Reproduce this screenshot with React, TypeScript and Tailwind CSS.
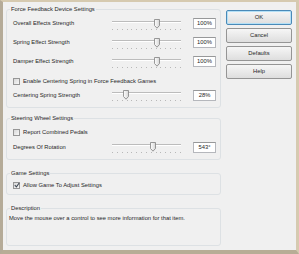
import type { ReactNode } from "react";

function Group({ title, className, children }: { title: string; className: string; children: ReactNode }) {
  return (
    <fieldset className={`rounded-[3px] border border-[#dde1e4] ${className}`}>
      <legend className="ml-[3px] h-[8px] px-[1px] leading-[8px]">{title}</legend>
      {children}
    </fieldset>
  );
}

function Thumb({ className }: { className: string }) {
  return (
    <svg className={`absolute top-[2px] ${className}`} width="6" height="10" viewBox="0 0 6 10">
      <defs>
        <linearGradient id="thumbFill" x1="0" y1="0" x2="1" y2="0">
          <stop offset="0" stopColor="#ffffff" />
          <stop offset="1" stopColor="#d6d6d6" />
        </linearGradient>
      </defs>
      <path d="M0.5 0.5 H5.5 V6.5 L3 9.2 L0.5 6.5 Z" fill="url(#thumbFill)" stroke="#808080" strokeWidth="0.8" />
    </svg>
  );
}

function Slider({ thumb }: { thumb: string }) {
  return (
    <div className="relative h-[14px] w-[69px]">
      <div className="absolute left-0 right-0 top-[4px] h-[1px] bg-[#bcbcbc]" />
      <div className="absolute left-0 right-0 top-[5px] h-[1px] bg-white" />
      <div className="absolute left-0 right-0 top-[12px] flex justify-between">
        {Array.from({ length: 15 }).map((_, i) => (
          <span key={i} className="h-[1px] w-[1px] bg-[#b8b8b8]" />
        ))}
      </div>
      <Thumb className={thumb} />
    </div>
  );
}

function SliderRow({ label, value, thumb, className = "" }: { label: string; value: string; thumb: string; className?: string }) {
  return (
    <div className={`flex items-center ${className}`}>
      <span className="w-[99px]">{label}</span>
      <Slider thumb={thumb} />
      <div className="ml-[12px] flex h-[11px] w-[23px] items-center justify-center border border-[#b5b7bc] border-t-[#979899] bg-white">
        {value}
      </div>
    </div>
  );
}

function Check({ label, checked = false, className = "" }: { label: string; checked?: boolean; className?: string }) {
  return (
    <div className={`flex h-[14px] items-center ${className}`}>
      <span className="relative flex h-[7px] w-[7px] items-center justify-center border border-[#969696] bg-gradient-to-br from-[#d8d8d8] to-[#f8f8f8]">
        {checked && (
          <svg width="6" height="6" viewBox="0 0 6 6" className="absolute">
            <path d="M0.8 3.2 L2.4 4.8 L5.2 1" fill="none" stroke="#404a55" strokeWidth="1.1" />
          </svg>
        )}
      </span>
      <span className="ml-[3px]">{label}</span>
    </div>
  );
}

function Button({ label, primary = false }: { label: string; primary?: boolean }) {
  return (
    <button
      className={`flex h-[15px] w-[66px] items-center justify-center rounded-[2px] border bg-gradient-to-b from-[#f6f6f6] to-[#dedede] ${
        primary ? "border-[#4a8ab8] shadow-[inset_0_0_0_1px_#b4e0f6]" : "border-[#959595]"
      }`}
    >
      {label}
    </button>
  );
}

export default function App() {
  return (
    <div className="h-[254px] w-[299px] border-b-[4px] border-l-[3px] border-r-[3px] border-t-[2px] border-[#d6cab0] border-l-[#b5ab98] border-b-[#b8ad96] bg-[#f0f0f0] font-['Liberation_Sans',Arial,sans-serif] text-[5.8px] text-[#262626]">
      <div className="flex">
        <div className="ml-[3px] flex w-[215px] flex-col">
          <Group title="Force Feedback Device Settings" className="mt-[3px]">
            <div className="flex flex-col pb-[5px] pl-[6px] pr-[4px] pt-[1px]">
              <SliderRow label="Overall Effects Strength" value="100%" thumb="left-[42px]" className="h-[19px]" />
              <SliderRow label="Spring Effect Strength" value="100%" thumb="left-[42px]" className="h-[19px]" />
              <SliderRow label="Damper Effect Strength" value="100%" thumb="left-[42px]" className="h-[19px]" />
              <Check label="Enable Centering Spring in Force Feedback Games" className="mt-[3px]" />
              <SliderRow label="Centering Spring Strength" value="28%" thumb="left-[11px]" className="h-[14px]" />
            </div>
          </Group>
          <Group title="Steering Wheel Settings" className="mt-[6px]">
            <div className="flex flex-col pb-[5px] pl-[6px] pr-[4px]">
              <Check label="Report Combined Pedals" className="mt-[3px]" />
              <SliderRow label="Degrees Of Rotation" value="543°" thumb="left-[38px]" className="mt-[1px] h-[14px]" />
            </div>
          </Group>
          <Group title="Game Settings" className="mt-[9px]">
            <div className="flex flex-col pb-[2px] pl-[6px]">
              <Check label="Allow Game To Adjust Settings" checked className="mt-[1px]" />
            </div>
          </Group>
          <Group title="Description" className="mt-[9px] h-[42px]">
            <div className="mt-[2px] h-[8px] pl-[2px] leading-[8px]">
              Move the mouse over a control to see more information for that item.
            </div>
          </Group>
        </div>
        <div className="ml-[5px] mt-[8px] flex flex-col gap-[3px]">
          <Button label="OK" primary />
          <Button label="Cancel" />
          <Button label="Defaults" />
          <Button label="Help" />
        </div>
      </div>
    </div>
  );
}
